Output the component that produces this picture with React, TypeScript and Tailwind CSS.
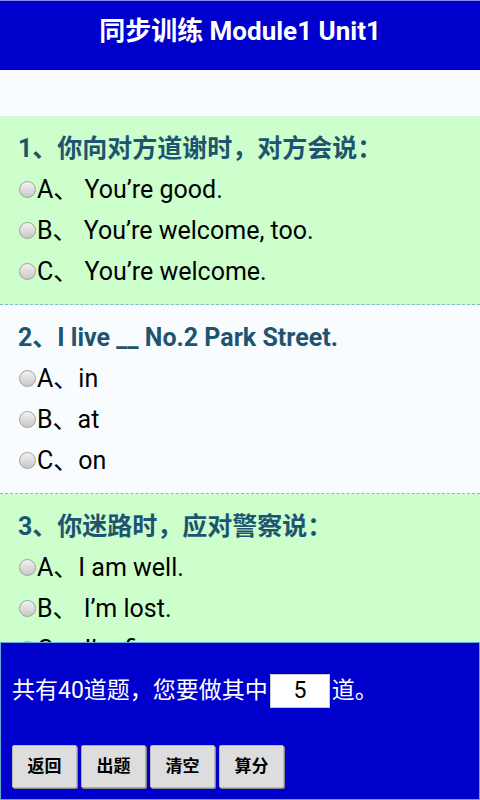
import React from 'react';

type Question = {
  title: string;
  options: string[];
};

const questions: Question[] = [
  { title: '1、你向对方道谢时，对方会说：', options: ['A、 You’re good.', 'B、 You’re welcome, too.', 'C、 You’re welcome.'] },
  { title: '2、I live __ No.2 Park Street.', options: ['A、in', 'B、at', 'C、on'] },
  { title: '3、你迷路时，应对警察说：', options: ['A、I am well.', 'B、 I’m lost.', 'C、 I’m fine.'] },
  { title: '4、Tom is ___ English boy.', options: ['A、a', 'B、an', 'C、the'] },
];

const font = { fontFamily: 'Roboto, "Noto Sans CJK SC", sans-serif' };

const Radio = () => (
  <span className="inline-block w-[17px] h-[17px] ml-[1px] mr-[1px] shrink-0 rounded-full border border-[#a0a0a0] bg-gradient-to-b from-[#f2f2f2] to-[#c8c8c8]" />
);

const QuestionBlock = ({ q, index }: { q: Question; index: number }) => (
  <div
    className={`px-[18px] pt-[12px] pb-[12px] border-b border-dashed border-[#7fb8d6] ${
      index % 2 === 0 ? 'bg-[#ccffcc]' : 'bg-[#f8fcfe]'
    }`}
  >
    <p className="h-[41px] flex items-center text-[25px] font-bold text-[#1f5470] whitespace-nowrap">{q.title}</p>
    {q.options.map((opt) => (
      <label key={opt} className="h-[41px] flex items-center text-[25px] text-black whitespace-nowrap">
        <Radio />
        <span>{opt}</span>
      </label>
    ))}
  </div>
);

const Btn = ({ label, focused }: { label: string; focused?: boolean }) => (
  <button
    className={`h-[43px] w-[65px] leading-none bg-[#dddddd] text-[17px] font-bold text-black border rounded-[2px] shadow-[1px_1px_0_#888] ${
      focused ? 'border-[#f0a020]' : 'border-[#bbbbbb]'
    }`}
  >
    {label}
  </button>
);

export default function App() {
  return (
    <div className="min-h-[800px] bg-[#f8fcfe] pb-[160px]" style={font}>
      <header className="h-[70px] pb-[8px] bg-[#0000cc] flex items-center justify-center border-t border-[#8888ee]">
        <h1 className="text-[26px] font-bold text-white">同步训练 Module1 Unit1</h1>
      </header>
      <div className="h-[46px]" />
      {questions.map((q, i) => (
        <QuestionBlock key={i} q={q} index={i} />
      ))}

      <div className="fixed bottom-0 inset-x-0 h-[158px] bg-[#0000cc] border border-[#66aadd] px-[11px]">
        <div className="h-[96px] flex items-center text-[23px] text-white whitespace-nowrap">
          <span>共有40道题，您要做其中</span>
          <input
            readOnly
            value="5"
            className="w-[60px] h-[34px] mx-[2px] bg-white text-black text-center text-[23px] border border-[#cccccc] outline-none"
          />
          <span>道。</span>
        </div>
        <div className="flex gap-[4px] mt-[6px]">
          <Btn label="返回" />
          <Btn label="出题" focused />
          <Btn label="清空" />
          <Btn label="算分" />
        </div>
      </div>
    </div>
  );
}
